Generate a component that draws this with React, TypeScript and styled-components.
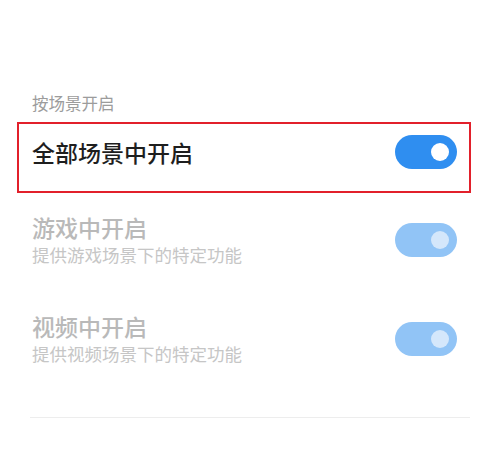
import styled, { createGlobalStyle } from 'styled-components';

const GlobalStyle = createGlobalStyle`
  html, body {
    margin: 0;
    padding: 0;
    background: #ffffff;
  }
  body {
    font-family: "Noto Sans CJK SC", "Noto Sans", sans-serif;
  }
`;

const Page = styled.div`
  width: 480px;
  height: 450px;
  overflow: hidden;
  padding-top: 92px;
  box-sizing: border-box;
  display: flex;
  flex-direction: column;
`;

const SectionLabel = styled.div`
  padding-left: 32px;
  font-size: 16.5px;
  line-height: 23px;
  color: #9c9c9c;
`;

const Highlight = styled.div`
  margin: 7px 9px 0 17px;
  border: 2px solid #e2202b;
  padding: 0 12px 11px 13px;
`;

const Row = styled.div<{ $height?: number }>`
  display: flex;
  align-items: center;
  justify-content: space-between;
  height: ${(p) => (p.$height ? `${p.$height}px` : 'auto')};
`;

const List = styled.div`
  display: flex;
  flex-direction: column;
  gap: 43px;
  margin-top: 19px;
  padding: 0 23px 0 32px;
`;

const TextBlock = styled.div`
  display: flex;
  flex-direction: column;
`;

const Title = styled.div<{ $muted?: boolean }>`
  font-size: 23px;
  line-height: 30px;
  font-weight: 500;
  color: ${(p) => (p.$muted ? '#b9b9b9' : '#1e1e1e')};
`;

const Subtitle = styled.div`
  font-size: 17.5px;
  line-height: 26px;
  color: #c6c6c6;
`;

const Track = styled.div<{ $disabled?: boolean }>`
  width: 62px;
  height: 34px;
  border-radius: 17px;
  background: ${(p) => (p.$disabled ? '#91c4f6' : '#2f8ef0')};
  display: flex;
  align-items: center;
  justify-content: flex-end;
  padding-right: 8px;
  box-sizing: border-box;
  flex-shrink: 0;
`;

const Knob = styled.div<{ $disabled?: boolean }>`
  width: 18px;
  height: 18px;
  border-radius: 50%;
  background: ${(p) => (p.$disabled ? '#d4e7fb' : '#ffffff')};
`;

const Divider = styled.div`
  height: 1px;
  background: #ededed;
  margin: 50px 10px 0 30px;
`;

const Toggle = ({ disabled }: { disabled?: boolean }) => (
  <Track $disabled={disabled}>
    <Knob $disabled={disabled} />
  </Track>
);

const scenes = [
  { title: '游戏中开启', desc: '提供游戏场景下的特定功能' },
  { title: '视频中开启', desc: '提供视频场景下的特定功能' },
];

export default function App() {
  return (
    <>
      <GlobalStyle />
      <Page>
        <SectionLabel>按场景开启</SectionLabel>
        <Highlight>
          <Row $height={56}>
            <Title>全部场景中开启</Title>
            <Toggle />
          </Row>
        </Highlight>
        <List>
          {scenes.map((s) => (
            <Row key={s.title}>
              <TextBlock>
                <Title $muted>{s.title}</Title>
                <Subtitle>{s.desc}</Subtitle>
              </TextBlock>
              <Toggle disabled />
            </Row>
          ))}
        </List>
        <Divider />
      </Page>
    </>
  );
}
